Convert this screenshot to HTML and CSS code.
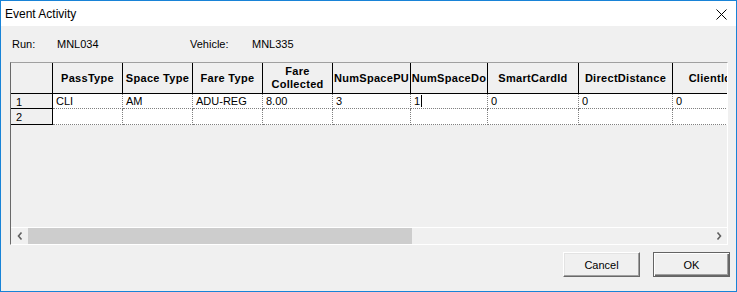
FILE: index.html
```html
<!DOCTYPE html>
<html>
<head>
    <meta charset="UTF-8">
    <title>Event Activity</title>
    <link rel="stylesheet" href="styles.css">
</head>
<body>
    <div class="window">
        <div class="titlebar">
            <span class="title">Event Activity</span>
            <svg class="close" width="11" height="11" viewBox="0 0 11 11">
                <path d="M0.5 0.5 L10.5 10.5 M10.5 0.5 L0.5 10.5" stroke="#000" stroke-width="1" fill="none"/>
            </svg>
        </div>
        <div class="content">
            <div class="info">
                <span class="run-label">Run:</span>
                <span class="run-value">MNL034</span>
                <span class="vehicle-label">Vehicle:</span>
                <span>MNL335</span>
            </div>
            <div class="grid">
                <div class="cells">
                    <div class="hd"></div>
                    <div class="hd">PassType</div>
                    <div class="hd">Space Type</div>
                    <div class="hd">Fare Type</div>
                    <div class="hd">Fare<br>Collected</div>
                    <div class="hd">NumSpacePU</div>
                    <div class="hd">NumSpaceDo</div>
                    <div class="hd">SmartCardId</div>
                    <div class="hd">DirectDistance</div>
                    <div class="hd">ClientId</div>

                    <div class="rh">1</div>
                    <div class="td">CLI</div>
                    <div class="td">AM</div>
                    <div class="td">ADU-REG</div>
                    <div class="td">8.00</div>
                    <div class="td">3</div>
                    <div class="td">1<span class="caret"></span></div>
                    <div class="td">0</div>
                    <div class="td">0</div>
                    <div class="td">0</div>

                    <div class="rh">2</div>
                    <div class="td"></div>
                    <div class="td"></div>
                    <div class="td"></div>
                    <div class="td"></div>
                    <div class="td"></div>
                    <div class="td"></div>
                    <div class="td"></div>
                    <div class="td"></div>
                    <div class="td"></div>
                </div>
                <div class="hscroll">
                    <div class="sb-btn">
                        <svg width="6" height="8" viewBox="0 0 6 8">
                            <path d="M4.5 0.5 L1.5 4 L4.5 7.5" stroke="#606060" stroke-width="1.6" fill="none"/>
                        </svg>
                    </div>
                    <div class="sb-thumb"></div>
                    <div class="sb-track"></div>
                    <div class="sb-btn">
                        <svg width="6" height="8" viewBox="0 0 6 8">
                            <path d="M1.5 0.5 L4.5 4 L1.5 7.5" stroke="#606060" stroke-width="1.6" fill="none"/>
                        </svg>
                    </div>
                </div>
            </div>
            <div class="buttons">
                <button class="btn">Cancel</button>
                <button class="btn default">OK</button>
            </div>
        </div>
    </div>
</body>
</html>
```

FILE: styles.css
```css
body {
    margin: 0;
    font-family: "Liberation Sans", Arial, sans-serif;
    font-size: 11px;
    color: #000;
}

.window {
    width: 737px;
    height: 292px;
    box-sizing: border-box;
    border: 1px solid #1883d7;
    background: #f0f0f0;
    display: flex;
    flex-direction: column;
}

.titlebar {
    height: 25px;
    background: #fff;
    display: flex;
    align-items: center;
    justify-content: space-between;
    padding: 0 9px 0 4px;
}

.title {
    font-size: 12px;
}

.close {
    display: block;
    margin-top: 1px;
}

.content {
    flex: 1;
    display: flex;
    flex-direction: column;
}

.info {
    height: 36px;
    display: flex;
    align-items: center;
    padding-left: 11px;
}

.run-label {
    width: 45px;
}

.run-value {
    width: 133px;
}

.vehicle-label {
    width: 62px;
}

.grid {
    margin-left: 9px;
    width: 718px;
    height: 183px;
    box-sizing: border-box;
    border: 1px solid;
    border-color: #a0a0a0 #fff #fff #696969;
    display: flex;
    flex-direction: column;
}

.cells {
    flex: 1;
    display: grid;
    grid-template-columns: 42px 70px 70px 70px 70px 78px 77px 91px 94px 75px;
    grid-template-rows: 31px 15px 16px;
    align-content: start;
    overflow: hidden;
}

.hd {
    box-sizing: border-box;
    background: #f0f0f0;
    border-right: 1px solid #000;
    border-bottom: 1px solid #000;
    font-weight: bold;
    letter-spacing: 0.3px;
    line-height: 13px;
    display: flex;
    align-items: center;
    justify-content: center;
    text-align: center;
    white-space: nowrap;
    overflow: hidden;
}

.rh {
    box-sizing: border-box;
    background: #f0f0f0;
    border-right: 1px solid #000;
    border-bottom: 1px solid #000;
    padding: 1px 0 0 5px;
    line-height: 14px;
}

.td {
    box-sizing: border-box;
    background: #fff;
    border-right: 1px dotted #808080;
    border-bottom: 1px dotted #808080;
    padding: 0 0 0 3px;
    line-height: 14px;
    white-space: nowrap;
    overflow: hidden;
}

.caret {
    display: inline-block;
    width: 1px;
    height: 12px;
    background: #000;
    margin-left: 1px;
    vertical-align: -2px;
}

.hscroll {
    height: 17px;
    box-sizing: border-box;
    border-top: 1px solid #fff;
    display: flex;
}

.sb-btn {
    width: 17px;
    display: flex;
    align-items: center;
    justify-content: center;
}

.sb-thumb {
    width: 384px;
    background: #cdcdcd;
}

.sb-track {
    flex: 1;
}

.buttons {
    margin-top: 7px;
    padding-right: 6px;
    display: flex;
    justify-content: flex-end;
    gap: 13px;
}

.btn {
    width: 77px;
    height: 25px;
    box-sizing: border-box;
    background: #f0f0f0;
    border: 1px solid;
    border-color: #fff #696969 #696969 #fff;
    box-shadow: inset -1px -1px #a0a0a0, inset 1px 1px #e3e3e3;
    font-family: "Liberation Sans", Arial, sans-serif;
    font-size: 11px;
    color: #000;
    padding: 0;
}

.btn.default {
    border-color: #646464;
    box-shadow: inset 1px 1px #fff, inset -1px -1px #696969, inset -2px -2px #a0a0a0;
}
```
